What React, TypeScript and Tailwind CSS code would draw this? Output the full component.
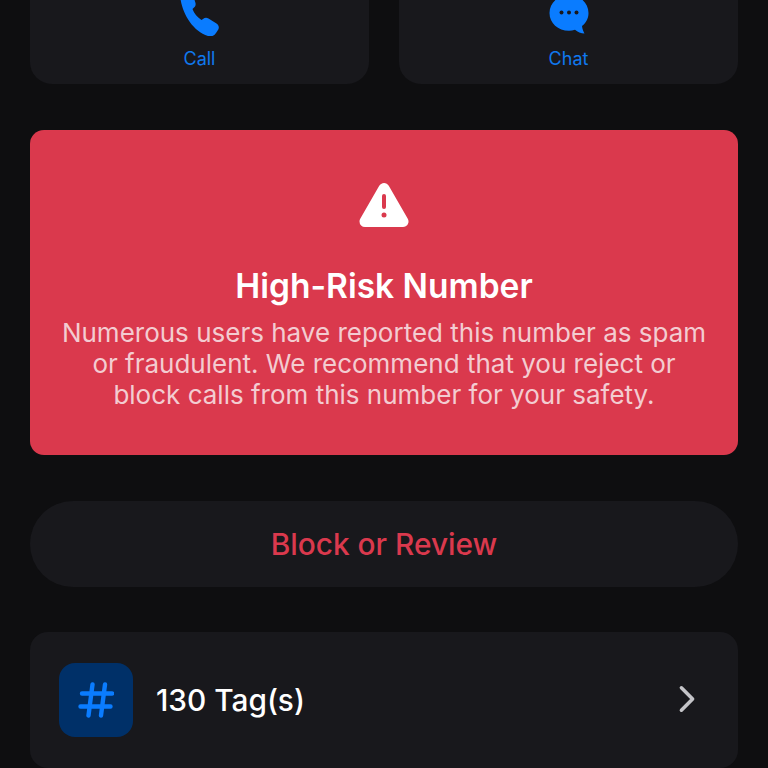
export default function App() {
  return (
    <div className="h-[768px] w-[768px] overflow-hidden bg-[#0e0e10] px-[30px] font-['Inter',sans-serif]">
      <div className="-mt-[60px] grid grid-cols-2 gap-[30px]">
        <div className="flex h-[144px] flex-col items-center rounded-[22px] bg-[#18181c] pt-[52px]">
          <svg viewBox="0 0 40 44" className="h-[44px] w-[40px]">
            <path d="M0.5 7 C0 3 3 0 6 0 L9 0 C11.5 0 12.5 1 13 3 L15.5 11 C16 13.5 15 15 13.5 16 L12.5 17 C14 21.5 17.5 25.5 21.5 28 L23 27 C25 25.5 26.5 25.5 28.5 26.5 L36.5 31.5 C38.5 33 39.5 35 38.3 37.5 L36 41 C34 44 31 45 28 44 C13 39 3 23 0.5 7 Z" fill="#0a7cff" />
          </svg>
          <span className="mt-[10px] text-[18px] leading-[26px] text-[#1078ee]">Call</span>
        </div>
        <div className="flex h-[144px] flex-col items-center rounded-[22px] bg-[#18181c] pt-[52px]">
          <svg viewBox="0 0 40 44" className="h-[44px] w-[40px]">
            <path d="M20 3 C31 3 39.5 11 39.5 21 C39.5 27 36.5 31.5 33 34 C33.3 37 34.5 39.5 35.5 41.5 C32 41.5 28.5 40 26 37.8 C24 38.5 22 38.8 20 38.8 C9 38.8 0.5 31 0.5 21 C0.5 11 9 3 20 3 Z" fill="#0a7cff" />
            <circle cx="12.5" cy="20.5" r="2" fill="#18181c" />
            <circle cx="20" cy="20.5" r="2" fill="#18181c" />
            <circle cx="27.5" cy="20.5" r="2" fill="#18181c" />
          </svg>
          <span className="mt-[10px] text-[18px] leading-[26px] text-[#1078ee]">Chat</span>
        </div>
      </div>

      <div className="mt-[46px] flex h-[325px] flex-col items-center rounded-[14px] bg-[#da394d] pt-[52px] text-center">
        <svg viewBox="0 0 50 46" className="h-[46px] w-[50px]">
          <path d="M25 6.5 L44 39.5 L6 39.5 Z" fill="#fff" stroke="#fff" strokeWidth="11" strokeLinejoin="round" />
          <rect x="23" y="12" width="4" height="15" rx="2" fill="#da394d" />
          <circle cx="25" cy="33" r="2.5" fill="#da394d" />
        </svg>
        <h2 className="mt-[38px] text-[33.5px] font-semibold leading-[40px] text-white">High-Risk Number</h2>
        <p className="mt-[11px] w-[650px] text-[26px] leading-[31px] text-[#f3ccd1]">
          Numerous users have reported this number as spam or fraudulent. We recommend that you reject or block calls from this number for your safety.
        </p>
      </div>

      <button className="mt-[46px] flex h-[86px] w-full items-center justify-center rounded-full bg-[#18181c] text-[29.8px] font-medium text-[#da394d]">
        Block or Review
      </button>

      <div className="mt-[45px] flex h-[136px] items-start rounded-[18px] bg-[#18181c] pl-[29px] pr-[42px] pt-[31px]">
        <div className="flex h-[74px] w-[74px] items-center justify-center rounded-[16px] bg-[#003068]">
          <svg viewBox="0 0 36 36" className="h-[36px] w-[36px]" fill="none" stroke="#0a7cff" strokeWidth="4.4" strokeLinecap="round">
            <path d="M14.5 2.5 L10.5 33.5 M27 2.5 L23 33.5 M4 11.5 H34 M2.5 24.5 H32.5" />
          </svg>
        </div>
        <span className="ml-[23px] mt-[18px] flex-1 text-[29.8px] font-medium leading-[38px] text-white">130 Tag(s)</span>
        <svg viewBox="0 0 18 30" className="mt-[22px] h-[28px] w-[18px]" fill="none" stroke="#c4c4c8" strokeWidth="3.8" strokeLinecap="round" strokeLinejoin="round">
          <path d="M3 3 L15 15 L3 27" />
        </svg>
      </div>
    </div>
  );
}
